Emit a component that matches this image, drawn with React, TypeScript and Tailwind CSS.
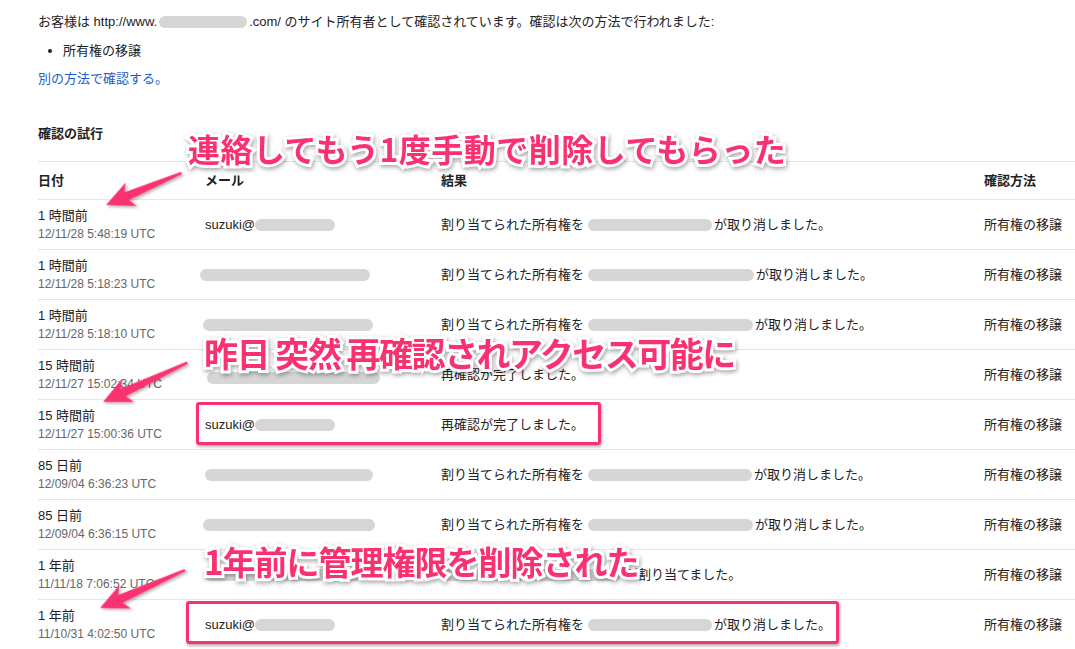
import React from 'react';

const PINK = '#fa3170';

type Row = {
  ago: string;
  ts: string;
  email: React.ReactNode;
  result: React.ReactNode;
};

// blurred-out address
function Blur({ w, className = '' }: { w: number; className?: string }) {
  return <span className={`inline-block h-[12px] rounded-full bg-[#d6d6d6] align-middle ${className}`} style={{ width: w }} />;
}

const revoked = (w: number) => (
  <>
    割り当てられた所有権を
    <Blur w={w} className="ml-[4px] mr-[2px]" />
    が取り消しました。
  </>
);

const suzuki = (
  <>
    suzuki@
    <Blur w={80} />
  </>
);

const ROWS: Row[] = [
  { ago: '1 時間前', ts: '12/11/28 5:48:19 UTC', email: suzuki, result: revoked(124) },
  { ago: '1 時間前', ts: '12/11/28 5:18:23 UTC', email: <Blur w={170} className="-ml-[5px]" />, result: revoked(166) },
  { ago: '1 時間前', ts: '12/11/28 5:18:10 UTC', email: <Blur w={170} className="-ml-[2px]" />, result: revoked(165) },
  { ago: '15 時間前', ts: '12/11/27 15:02:34 UTC', email: <Blur w={173} className="ml-[2px] mt-[6px]" />, result: '再確認が完了しました。' },
  { ago: '15 時間前', ts: '12/11/27 15:00:36 UTC', email: suzuki, result: '再確認が完了しました。' },
  { ago: '85 日前', ts: '12/09/04 6:36:23 UTC', email: <Blur w={168} />, result: revoked(164) },
  { ago: '85 日前', ts: '12/09/04 6:36:15 UTC', email: <Blur w={172} className="-ml-[2px]" />, result: revoked(165) },
  {
    ago: '1 年前',
    ts: '11/11/18 7:06:52 UTC',
    email: <Blur w={168} />,
    result: (
      <>
        <Blur w={180} className="mr-[4px]" />
        が割り当てました。
      </>
    ),
  },
  { ago: '1 年前', ts: '11/10/31 4:02:50 UTC', email: suzuki, result: revoked(124) },
];

const COLS = 'grid grid-cols-[167px_236px_543px_91px]';

// arrow pointing left from its tip, tail at length L
function arrowPoints(L: number) {
  return `0,0 27,-13 22,-4.5 ${L},-1.3 ${L},1.3 23,4.5 28,13`;
}

const ARROWS = [
  { x: 106, y: 205, a: -23, L: 82 },
  { x: 103, y: 402, a: -25, L: 93 },
  { x: 100, y: 608, a: -24, L: 93 },
];

const NOTE =
  "absolute whitespace-nowrap leading-none font-bold text-[#fa3170] [paint-order:stroke_fill] [-webkit-text-stroke:6px_white] [filter:drop-shadow(1px_2px_2px_rgba(0,0,0,0.35))] font-['Noto_Sans_CJK_JP',sans-serif]";

export default function App() {
  return (
    <div className="relative h-[649px] w-[1075px] overflow-hidden bg-white text-[13px] text-[#222] font-['Liberation_Sans','Noto_Sans_CJK_JP',sans-serif]">
      <div className="pl-[38px] pt-[13px]">
        <p className="leading-[18px]">
          お客様は http://www.
          <Blur w={88} className="-mt-[2px] ml-[2px] mr-[2px]" />
          .com/ のサイト所有者として確認されています。確認は次の方法で行われました:
        </p>
        <ul className="mt-[11px] list-disc pl-[25px] leading-[18px]">
          <li>所有権の移譲</li>
        </ul>
        <a className="mt-[10px] block leading-[18px] text-[#1a5cc8]">別の方法で確認する。</a>

        <h2 className="mt-[37px] font-bold leading-[18px]">確認の試行</h2>

        {/* Attempts table */}
        <div className="mt-[18px]">
          <div className={`${COLS} h-[39px] items-center border-y border-[#e6e6e6] font-bold`}>
            <div>日付</div>
            <div>メール</div>
            <div>結果</div>
            <div>確認方法</div>
          </div>
          {ROWS.map((r, i) => (
            <div key={i} className={`${COLS} h-[50px] items-center border-b border-[#e6e6e6]`}>
              <div className="flex flex-col leading-[19px]">
                <span>{r.ago}</span>
                <span className="text-[12px] text-[#666]">{r.ts}</span>
              </div>
              <div className="flex items-center whitespace-nowrap">{r.email}</div>
              <div className="whitespace-nowrap">{r.result}</div>
              <div className="whitespace-nowrap">所有権の移譲</div>
            </div>
          ))}
        </div>
      </div>

      {/* highlight boxes */}
      <div className="pointer-events-none absolute left-[196px] top-[402px] h-[43px] w-[405px] rounded-[3px] border-[3px] border-[#fa3170] shadow-[1px_2px_3px_rgba(0,0,0,0.3)]" />
      <div className="pointer-events-none absolute left-[186px] top-[601px] h-[43px] w-[653px] rounded-[3px] border-[3px] border-[#fa3170] shadow-[1px_2px_3px_rgba(0,0,0,0.3)]" />

      {/* arrows */}
      <svg className="pointer-events-none absolute inset-0" width={1075} height={649}>
        <defs>
          <filter id="sh" x="-20%" y="-50%" width="140%" height="200%">
            <feDropShadow dx="1" dy="2" stdDeviation="1.5" floodOpacity="0.35" />
          </filter>
        </defs>
        {ARROWS.map((a, i) => (
          <polygon
            key={i}
            points={arrowPoints(a.L)}
            fill={PINK}
            filter="url(#sh)"
            transform={`translate(${a.x} ${a.y}) rotate(${a.a})`}
          />
        ))}
      </svg>

      {/* notes */}
      <div className={`${NOTE} left-[188px] top-[132px] text-[32px] tracking-[0.5px]`}>連絡してもう1度手動で削除してもらった</div>
      <div className={`${NOTE} left-[204px] top-[336px] text-[34px] tracking-[-1.5px]`}>昨日 突然 再確認されアクセス可能に</div>
      <div className={`${NOTE} left-[204px] top-[545px] text-[33px] tracking-[-1px]`}>1年前に管理権限を削除された</div>
    </div>
  );
}
